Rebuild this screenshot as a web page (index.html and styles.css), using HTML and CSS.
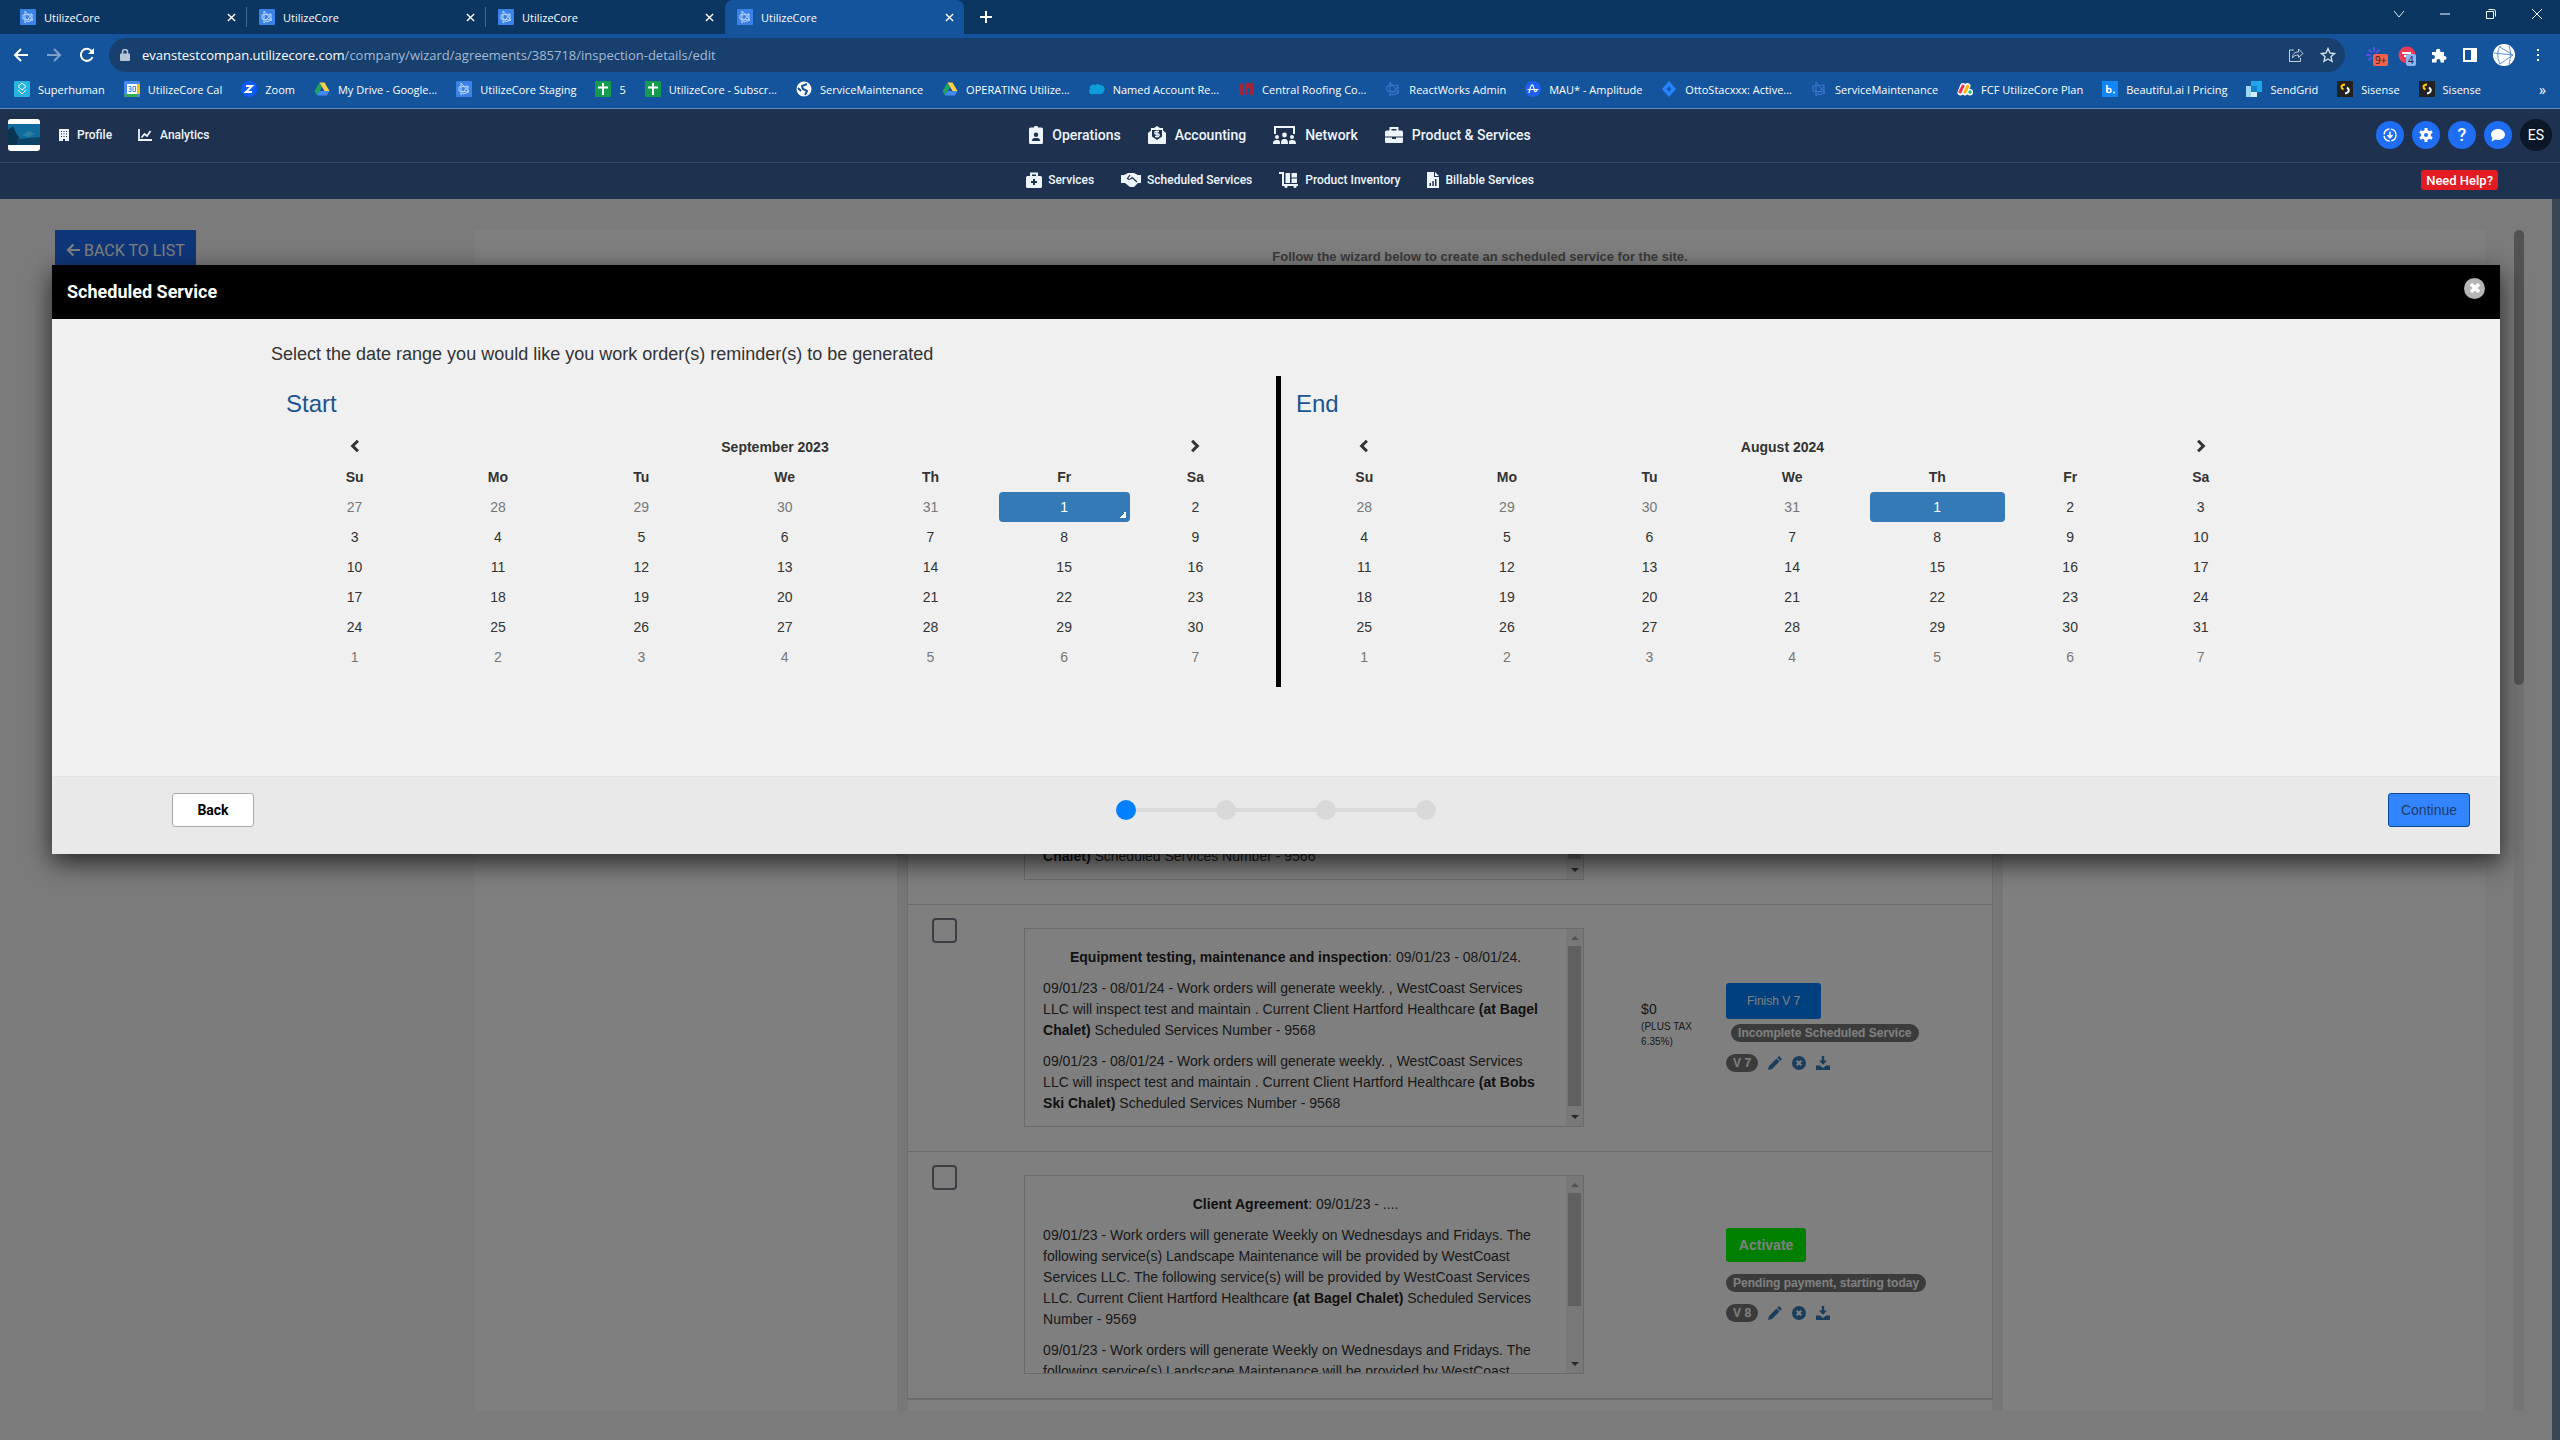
FILE: index.html
```html
<!DOCTYPE html>
<html lang="en">
<head>
  <meta charset="UTF-8">
  <meta name="viewport" content="width=device-width, initial-scale=1.0">
  <title>UtilizeCore</title>
  <link rel="stylesheet" href="styles.css">
</head>
<body>
  <!-- Shared icons -->
  <svg class="sprite" aria-hidden="true">
    <symbol id="i-core" viewBox="0 0 16 16"><rect width="16" height="16" rx="1" fill="#3a82e8"/><path d="M5 2v12l7-9M5 2l8 9-6 2M3 6l9-1v6l-9-1z" fill="none" stroke="#b9d6ff"/></symbol>
    <symbol id="i-core-dim" viewBox="0 0 16 16"><path d="M5 1v14l8-10M5 1l9 11-7 2M2 5l11-1v7L2 10z" fill="none" stroke="#3c78d0"/></symbol>
    <symbol id="i-close" viewBox="0 0 10 10"><path d="M1 1l8 8M9 1l-8 8" fill="none" stroke="currentColor" stroke-width="1.5"/></symbol>
    <symbol id="i-drive" viewBox="0 0 16 16"><path d="M5.500 1.500L8 6 3 14.500.500 10z" fill="#1ea362"/><path d="M5.500 1.500h5L15.500 10h-5z" fill="#ffcf48"/><path d="M5.500 10h10L13 14.500H3z" fill="#4688f4"/></symbol>
    <symbol id="i-sheet" viewBox="0 0 16 16"><rect width="16" height="16" rx="1" fill="#159b50"/><path d="M8 2v12M3 6.500h10" stroke="#fff" stroke-width="2"/></symbol>
    <symbol id="i-sisense" viewBox="0 0 16 16"><rect width="16" height="16" fill="#222"/><path d="M8 3.500C3 4 4 7 6.500 8.500" fill="none" stroke="#ffcb05" stroke-width="2"/><path d="M10 6.500c3 2 2 5.500-2 6" fill="none" stroke="#fff" stroke-width="2"/></symbol>
    <symbol id="i-left" viewBox="0 0 10 12"><path d="M7.500 1.500L3 6l4.500 4.500" fill="none" stroke="currentColor" stroke-width="2.600"/></symbol>
    <symbol id="i-right" viewBox="0 0 10 12"><path d="M2.500 1.500L7 6l-4.500 4.500" fill="none" stroke="currentColor" stroke-width="2.600"/></symbol>
    <symbol id="i-pencil" viewBox="0 0 14 14"><path d="M0 14l1-4 7.500-7.500 3 3L4 13zM9.300 1.700L11 0l3 3-1.700 1.700z" fill="currentColor"/></symbol>
    <symbol id="i-cancel" viewBox="0 0 14 14"><path fill-rule="evenodd" fill="currentColor" d="M7 0a7 7 0 1 0 0 14A7 7 0 0 0 7 0zM4 5.400L5.400 4 7 5.600 8.600 4 10 5.400 8.400 7 10 8.600 8.600 10 7 8.400 5.400 10 4 8.600 5.600 7z"/></symbol>
    <symbol id="i-download" viewBox="0 0 14 14"><path fill="currentColor" d="M5.800 0h2.400v4.500H11L7 8.800 3 4.500h2.800zM0 9.500h4L7 12l3-2.500h4V14H0z"/></symbol>
  </svg>

  <!-- Browser chrome -->
  <div class="tab-strip">
    <button class="tab"><svg class="icon16"><use href="#i-core"/></svg><span>UtilizeCore</span><svg class="tab-close"><use href="#i-close"/></svg></button>
    <button class="tab"><svg class="icon16"><use href="#i-core"/></svg><span>UtilizeCore</span><svg class="tab-close"><use href="#i-close"/></svg></button>
    <button class="tab"><svg class="icon16"><use href="#i-core"/></svg><span>UtilizeCore</span><svg class="tab-close"><use href="#i-close"/></svg></button>
    <button class="tab active"><svg class="icon16"><use href="#i-core"/></svg><span>UtilizeCore</span><svg class="tab-close"><use href="#i-close"/></svg></button>
    <button class="new-tab" aria-label="New tab"><svg width="12" height="12" viewBox="0 0 12 12"><path d="M6 0v12M0 6h12" stroke="#fff" stroke-width="2"/></svg></button>
    <div class="window-controls">
      <button aria-label="Search tabs"><svg width="12" height="12" viewBox="0 0 12 12"><path d="M1 3l5 6 5-6" fill="none" stroke="#dfe8f2"/></svg></button>
      <button aria-label="Minimize"><svg width="12" height="12" viewBox="0 0 12 12"><path d="M1 6h10" stroke="#fff"/></svg></button>
      <button aria-label="Restore"><svg width="12" height="12" viewBox="0 0 12 12"><path d="M1.500 3.500h7v7h-7zM3.500 1.500h5a2 2 0 0 1 2 2v5" fill="none" stroke="#fff"/></svg></button>
      <button aria-label="Close"><svg width="12" height="12" viewBox="0 0 12 12"><path d="M1 1l10 10M11 1L1 11" stroke="#fff"/></svg></button>
    </div>
  </div>

  <div class="toolbar">
    <div class="nav-buttons">
      <button aria-label="Back"><svg width="16" height="16" viewBox="0 0 16 16"><path d="M15 8H2M8 2L2 8l6 6" fill="none" stroke="#fff" stroke-width="2"/></svg></button>
      <button aria-label="Forward"><svg width="16" height="16" viewBox="0 0 16 16"><path d="M1 8h13M8 2l6 6-6 6" fill="none" stroke="#7d9fc9" stroke-width="2"/></svg></button>
      <button aria-label="Reload"><svg width="16" height="16" viewBox="0 0 16 16"><path d="M13.500 10a6 6 0 1 1-1-6" fill="none" stroke="#fff" stroke-width="2"/><path d="M15 1v6H9z" fill="#fff"/></svg></button>
    </div>
    <div class="address">
      <svg width="10" height="12" viewBox="0 0 10 12"><rect y="4.500" width="10" height="7.500" rx="1" fill="#b9c6d6"/><path d="M2.500 5V3a2.500 2.500 0 0 1 5 0v2" fill="none" stroke="#b9c6d6" stroke-width="1.500"/></svg>
      <span class="url"><b>evanstestcompan.utilizecore.com</b>/company/wizard/agreements/385718/inspection-details/edit</span>
      <svg class="share" width="16" height="16" viewBox="0 0 16 16"><path d="M6 3H1.500v11.500h11V11M4.500 11c0-4 2-6 6-6V2l4.500 4.500-4.500 4V8c-3 0-5 1-6 3z" fill="none" stroke="#c4d0df"/></svg>
      <svg width="16" height="16" viewBox="0 0 16 16"><path d="M8 1.500l2 4.500 4.500.500-3.500 3 1 4.800L8 12l-4 2.300 1-4.800-3.500-3L6 6z" fill="none" stroke="#d5deea" stroke-width="1.400"/></svg>
    </div>
    <div class="extensions">
      <span class="ext"><svg width="18" height="18" viewBox="0 0 18 18"><path d="M9 1v16M1 9h16M3.500 3.500l11 11M14.500 3.500l-11 11" stroke="#5a50e0" stroke-width="2"/><circle cx="9" cy="9" r="3" fill="#14549c"/></svg><i class="ext-count red">9+</i></span>
      <span class="ext"><svg width="18" height="18" viewBox="0 0 18 18"><circle cx="9" cy="9" r="8.500" fill="#ee3a56"/><path d="M4 7h9M6 10h8" stroke="#fff" stroke-width="2"/></svg><i class="ext-count blue">4</i></span>
      <svg width="16" height="16" viewBox="0 0 16 16"><path d="M1 5h4V4a2.200 2.200 0 0 1 4.400 0v1H13v4h.500a2 2 0 0 1 0 4H13v2.500H9.500V14a2 2 0 0 0-4 0v1.500H1V12h1a2 2 0 0 0 0-4H1z" fill="#fff"/></svg>
      <svg width="16" height="16" viewBox="0 0 16 16"><path fill-rule="evenodd" d="M1 1h14v14H1zM3 3v10h6V3z" fill="#fff"/></svg>
      <svg width="22" height="22" viewBox="0 0 22 22"><circle cx="11" cy="11" r="11" fill="#fff"/><path d="M7 2c-3 6-3 12 0 18M7 3l13 8-13 9M16 2c2 6 2 12 0 18M1 9l19 2" fill="none" stroke="#5d8fd6"/></svg>
      <svg width="16" height="16" viewBox="0 0 16 16"><path d="M7 2h2v2H7zM7 7h2v2H7zM7 12h2v2H7z" fill="#fff"/></svg>
    </div>
  </div>

  <nav class="bookmarks">
    <a href="#"><svg class="icon16" viewBox="0 0 16 16"><rect width="16" height="16" rx="1" fill="#27b5e0"/><path d="M8 2l4 3.500L8 9 4 5.500zM4 9l4 4 4-4" fill="none" stroke="#fff"/></svg>Superhuman</a>
    <a href="#"><svg class="icon16" viewBox="0 0 16 16"><rect width="16" height="16" rx="1" fill="#4688f4"/><path d="M13 3h3v10h-3z" fill="#fbbc04"/><path d="M0 13h13v3H1z" fill="#34a853"/><path d="M3 3h10v10H3z" fill="#fff"/><path d="M4.500 5.500H7v5H4.500M5 8h2M9 5.500h2.500v5H9z" fill="none" stroke="#4688f4"/></svg>UtilizeCore Cal</a>
    <a href="#"><svg class="icon16" viewBox="0 0 16 16"><circle cx="8" cy="8" r="8" fill="#0b5cff"/><path d="M5 5h6l-6 6h6" fill="none" stroke="#fff" stroke-width="2"/></svg>Zoom</a>
    <a href="#"><svg class="icon16"><use href="#i-drive"/></svg>My Drive - Google...</a>
    <a href="#"><svg class="icon16"><use href="#i-core"/></svg>UtilizeCore Staging</a>
    <a href="#"><svg class="icon16"><use href="#i-sheet"/></svg>5</a>
    <a href="#"><svg class="icon16"><use href="#i-sheet"/></svg>UtilizeCore - Subscr...</a>
    <a href="#"><svg class="icon16" viewBox="0 0 16 16"><circle cx="8" cy="8" r="7.500" fill="#fff"/><path d="M11 3L6 5l1 3 4 2-2 4M2 7l3 3" fill="none" stroke="#14549c" stroke-width="2"/></svg>ServiceMaintenance</a>
    <a href="#"><svg class="icon16"><use href="#i-drive"/></svg>OPERATING Utilize...</a>
    <a href="#"><svg class="icon16" viewBox="0 0 16 16"><path d="M4 13a3 3 0 0 1-3-5 3.500 3.500 0 0 1 5-4 4 4 0 0 1 5 0 4 4 0 0 1 4 6 4 4 0 0 1-5 3H4z" fill="#0d9dda"/></svg>Named Account Re...</a>
    <a href="#"><svg class="icon16" viewBox="0 0 16 16"><path d="M1 3l5-1v12H1zM7 2h8v12h-3V7H9v7H7z" fill="#a3243b"/></svg>Central Roofing Co...</a>
    <a href="#"><svg class="icon16"><use href="#i-core-dim"/></svg>ReactWorks Admin</a>
    <a href="#"><svg class="icon16" viewBox="0 0 16 16"><circle cx="8" cy="8" r="8" fill="#1e61f0"/><path d="M4 12C6 2 8 2 9 8c1 4 2 3 3 1M2.500 8.500h11" fill="none" stroke="#fff" stroke-width="1.200"/></svg>MAU* - Amplitude</a>
    <a href="#"><svg class="icon16" viewBox="0 0 16 16"><path d="M8 0l7 8-7 8-7-8z" fill="#2684ff"/><path d="M8 5l2.500 3L8 11 5.500 8z" fill="#1558bc"/></svg>OttoStacxxx: Active...</a>
    <a href="#"><svg class="icon16"><use href="#i-core-dim"/></svg>ServiceMaintenance</a>
    <a href="#"><svg class="icon16" viewBox="0 0 16 16"><path d="M3.500 11.500L6 5M8 11.500L10.500 5M13 11v.500" fill="none" stroke="#fff" stroke-width="6" stroke-linecap="round"/><path d="M3 11l3-6" stroke="#f62b54" stroke-width="3" stroke-linecap="round"/><path d="M8 11l3-6" stroke="#ffb900" stroke-width="3" stroke-linecap="round"/><circle cx="13" cy="11" r="1.700" fill="#00c875"/></svg>FCF UtilizeCore Plan</a>
    <a href="#"><svg class="icon16" viewBox="0 0 16 16"><rect width="16" height="16" fill="#1288f8"/><path d="M5 4v7.500" stroke="#fff" stroke-width="1.600"/><circle cx="7" cy="9.500" r="2" fill="none" stroke="#fff" stroke-width="1.500"/><circle cx="12" cy="11.500" r="1" fill="#fff"/></svg>Beautiful.ai I Pricing</a>
    <a href="#"><svg class="icon16" viewBox="0 0 16 16"><path d="M5 0h11v11h-5V5H5z" fill="#1fa6ea"/><path d="M0 5h5v11H0z" fill="#9dd6f5"/><path d="M5 5h6v6H5z" fill="#1382c8"/><path d="M5 11h6v5H5z" fill="#d8f0fc"/></svg>SendGrid</a>
    <a href="#"><svg class="icon16"><use href="#i-sisense"/></svg>Sisense</a>
    <a href="#"><svg class="icon16"><use href="#i-sisense"/></svg>Sisense</a>
    <a class="more" href="#">»</a>
  </nav>

  <!-- App header -->
  <header class="app-header">
    <div class="header-row">
      <div class="header-left">
        <svg class="company-logo" viewBox="0 0 32 32"><rect width="32" height="32" rx="3" fill="#fff"/><rect y="5" width="32" height="21" fill="#0f6c9c"/><path d="M0 11l5-4 3 7 3 4-2 8H0z" fill="#0a3550"/><path d="M9 20l23-2v8H9z" fill="#0b4468"/><path d="M14 16l7-4 6 3-6 3z" fill="#2c7fa0"/></svg>
        <a class="small-link" href="#"><svg width="10" height="12" viewBox="0 0 10 12"><path fill-rule="evenodd" fill="currentColor" d="M0 0h10v12H6v-2H4v2H0zM2 2v1h1V2zM4.500 2v1h1V2zM7 2v1h1V2zM2 4.500v1h1v-1zM4.500 4.500v1h1v-1zM7 4.500v1h1v-1zM2 7v1h1V7zM4.500 7v1h1V7zM7 7v1h1V7z"/></svg>Profile</a>
        <a class="small-link" href="#"><svg width="14" height="12" viewBox="0 0 14 12"><path d="M1 0v11h13M3.500 8.500L6.500 5 9 7l3.500-5" fill="none" stroke="currentColor" stroke-width="1.800"/></svg>Analytics</a>
      </div>
      <nav class="main-nav">
        <a href="#"><svg width="14" height="18" viewBox="0 0 14 18"><path fill-rule="evenodd" fill="currentColor" d="M5 1.500a2 2 0 0 1 4 0h3.500A1.500 1.500 0 0 1 14 3v13.500a1.500 1.500 0 0 1-1.500 1.500h-11A1.500 1.500 0 0 1 0 16.500V3a1.500 1.500 0 0 1 1.500-1.500zM7 6.500a2.200 2.200 0 1 0 0 4.400 2.200 2.200 0 0 0 0-4.400zM3 15h8c0-2-1-3-2.500-3h-3C4 12 3 13 3 15z"/></svg>Operations</a>
        <a href="#"><svg width="18" height="18" viewBox="0 0 18 18"><path fill-rule="evenodd" fill="currentColor" d="M9 0l3 2h3v2.500L18 7v10a1 1 0 0 1-1 1H1a1 1 0 0 1-1-1V7l3-2.500V2h3zM4 4v6.500l5 3.500 5-3.500V4z"/><path d="M11 5.500H8a1.200 1.200 0 0 0 0 2.500h2a1.200 1.200 0 0 1 0 2.500H7M9 4.500v7" fill="none" stroke="currentColor" stroke-width="1.300"/></svg>Accounting</a>
        <a href="#"><svg width="23" height="18" viewBox="0 0 23 18"><path d="M2 8V1h19v7" fill="none" stroke="currentColor" stroke-width="2"/><g fill="currentColor"><circle cx="4" cy="11" r="2"/><circle cx="11.500" cy="9" r="2.400"/><circle cx="19" cy="11" r="2"/><path d="M0 18c0-3 1-4 4-4s3 1 3 4zM8 18c0-4 1-5 3.500-5s3.500 1 3.500 5zM16 18c0-3 0-4 3-4s4 1 4 4z"/></g></svg>Network</a>
        <a href="#"><svg width="18" height="18" viewBox="0 0 18 18"><path d="M5.500 5V2h7v3" fill="none" stroke="currentColor" stroke-width="2"/><path fill="currentColor" d="M1.500 4.500h15A1.500 1.500 0 0 1 18 6v4.500H0V6a1.500 1.500 0 0 1 1.500-1.500zM0 11.500h7v1.500h4v-1.500h7v4a1.500 1.500 0 0 1-1.500 1.500h-15A1.500 1.500 0 0 1 0 15.500z"/></svg>Product &amp; Services</a>
      </nav>
      <div class="header-right">
        <button class="round" aria-label="Downloads"><svg width="16" height="16" viewBox="0 0 16 16"><circle cx="8" cy="8" r="6" fill="none" stroke="#fff" stroke-width="1.400" stroke-dasharray="8 1.500"/><path d="M8 4.500v6M5.500 8L8 10.800 10.500 8" fill="none" stroke="#fff" stroke-width="1.500"/></svg></button>
        <button class="round" aria-label="Settings"><svg width="16" height="16" viewBox="0 0 16 16"><circle cx="8" cy="8" r="3.500" fill="none" stroke="#fff" stroke-width="3"/><path d="M8 1v3M8 12v3M2 4.500l2.500 1.400M11.500 10.100L14 11.500M14 4.500l-2.500 1.400M4.500 10.100L2 11.500" stroke="#fff" stroke-width="3"/></svg></button>
        <button class="round help" aria-label="Help">?</button>
        <button class="round" aria-label="Chat"><svg width="16" height="16" viewBox="0 0 16 16"><path d="M8 2c4 0 7 2.500 7 5.500S12 13 8 13c-1 0-1.800-.200-2.600-.400L1.500 14.500l1-3.500C1.500 10 1 9 1 7.500 1 4.500 4 2 8 2z" fill="#fff"/></svg></button>
        <button class="avatar">ES</button>
      </div>
    </div>
    <div class="header-row sub">
      <nav class="sub-nav">
        <a href="#"><svg width="16" height="16" viewBox="0 0 16 16"><path d="M5 5V1.500h6V5" fill="none" stroke="currentColor" stroke-width="2"/><path fill-rule="evenodd" fill="currentColor" d="M1.500 4h13A1.500 1.500 0 0 1 16 5.500v9a1.500 1.500 0 0 1-1.500 1.500h-13A1.500 1.500 0 0 1 0 14.500v-9A1.500 1.500 0 0 1 1.500 4zM7 7v2H5v2h2v2h2v-2h2V9H9V7z"/></svg>Services</a>
        <a href="#"><svg width="20" height="14" viewBox="0 0 20 14"><path fill="currentColor" d="M0 2h3l4-2h3l3 0 4 2h3v8h-3l-4 4H9L4 10H0z"/><path d="M9 2L6.500 5.500C8 7 10 6 11 4.500l5 4.500" fill="none" stroke="#1e3250" stroke-width="1.200"/></svg>Scheduled Services</a>
        <a href="#"><svg width="20" height="16" viewBox="0 0 20 16"><path d="M0 1h4v12h15" fill="none" stroke="currentColor" stroke-width="2"/><path d="M6.500 1H11v10H6.500zM12.500 1H18v4.500h-5.500zM12.500 6.500H18V11h-5.500z" fill="currentColor"/><circle cx="7" cy="14.500" r="1.500" fill="currentColor"/><circle cx="16" cy="14.500" r="1.500" fill="currentColor"/></svg>Product Inventory</a>
        <a href="#"><svg width="12" height="16" viewBox="0 0 12 16"><path fill-rule="evenodd" fill="currentColor" d="M0 0h7v5h5v11H0zM2.500 11v3H4v-3zM5.300 9v5h1.500V9zM8 7v7h1.500V7z"/><path d="M8 0l4 4H8z" fill="currentColor"/></svg>Billable Services</a>
      </nav>
      <button class="need-help">Need Help?</button>
    </div>
  </header>

  <main class="page">
    <div class="page-side"><a class="back-link" href="#"><svg width="14" height="14" viewBox="0 0 14 14"><path d="M14 7H2M7.500 1.500L2 7l5.500 5.500" fill="none" stroke="currentColor" stroke-width="2.200"/></svg>BACK TO LIST</a></div>
    <section class="panel">
      <p class="panel-title">Follow the wizard below to create an scheduled service for the site.</p>
      <div class="agreements">
        <table>
          <colgroup><col class="c-check"><col class="c-text"><col class="c-price"><col></colgroup>
          <tbody>
            <tr>
              <td class="check"><input type="checkbox" aria-label="Select version 6"></td>
              <td>
                <div class="terms">
                  <div class="terms-text">
                    <h3><b>Equipment testing, maintenance and inspection</b>: 09/01/23 - 08/01/24.</h3>
                    <p>09/01/23 - 08/01/24 - Work orders will generate weekly. , WestCoast Services LLC will inspect test and maintain . Current Client Hartford Healthcare <b>(at Bobs Ski Chalet)</b> Scheduled Services Number - 9566</p>
                    <p>09/01/23 - 08/01/24 - Work orders will generate weekly. , WestCoast Services LLC will inspect test and maintain . Current Client Hartford Healthcare <b>(at Bagel Chalet)</b> Scheduled Services Number - 9566</p>
                  </div>
                  <div class="scroll"><i class="up"></i><i class="thumb"></i><i class="down"></i></div>
                </div>
              </td>
              <td></td>
              <td></td>
            </tr>
            <tr>
              <td class="check"><input type="checkbox" aria-label="Select version 7"></td>
              <td>
                <div class="terms">
                  <div class="terms-text">
                    <h3><b>Equipment testing, maintenance and inspection</b>: 09/01/23 - 08/01/24.</h3>
                    <p>09/01/23 - 08/01/24 - Work orders will generate weekly. , WestCoast Services LLC will inspect test and maintain . Current Client Hartford Healthcare <b>(at Bagel Chalet)</b> Scheduled Services Number - 9568</p>
                    <p>09/01/23 - 08/01/24 - Work orders will generate weekly. , WestCoast Services LLC will inspect test and maintain . Current Client Hartford Healthcare <b>(at Bobs Ski Chalet)</b> Scheduled Services Number - 9568</p>
                  </div>
                  <div class="scroll"><i class="up"></i><i class="thumb"></i><i class="down"></i></div>
                </div>
              </td>
              <td class="price">$0<small>(PLUS TAX 6.35%)</small></td>
              <td>
                <div class="actions">
                  <button class="btn finish">Finish V 7</button>
                  <span class="badge inset">Incomplete Scheduled Service</span>
                  <div class="version">
                    <span class="badge">V 7</span>
                    <a href="#" aria-label="Edit"><svg><use href="#i-pencil"/></svg></a>
                    <a href="#" aria-label="Cancel"><svg><use href="#i-cancel"/></svg></a>
                    <a href="#" aria-label="Download"><svg><use href="#i-download"/></svg></a>
                  </div>
                </div>
              </td>
            </tr>
            <tr>
              <td class="check"><input type="checkbox" aria-label="Select version 8"></td>
              <td>
                <div class="terms">
                  <div class="terms-text">
                    <h3><b>Client Agreement</b>: 09/01/23 - ....</h3>
                    <p>09/01/23 - Work orders will generate Weekly on Wednesdays and Fridays. The following service(s) Landscape Maintenance will be provided by WestCoast Services LLC. The following service(s) will be provided by WestCoast Services LLC. Current Client Hartford Healthcare <b>(at Bagel Chalet)</b> Scheduled Services Number - 9569</p>
                    <p>09/01/23 - Work orders will generate Weekly on Wednesdays and Fridays. The following service(s) Landscape Maintenance will be provided by WestCoast</p>
                  </div>
                  <div class="scroll"><i class="up"></i><i class="thumb short"></i><i class="down"></i></div>
                </div>
              </td>
              <td></td>
              <td>
                <div class="actions spaced">
                  <button class="btn activate">Activate</button>
                  <span class="badge">Pending payment, starting today</span>
                  <div class="version">
                    <span class="badge">V 8</span>
                    <a href="#" aria-label="Edit"><svg><use href="#i-pencil"/></svg></a>
                    <a href="#" aria-label="Cancel"><svg><use href="#i-cancel"/></svg></a>
                    <a href="#" aria-label="Download"><svg><use href="#i-download"/></svg></a>
                  </div>
                </div>
              </td>
            </tr>
          </tbody>
        </table>
      </div>
    </section>
    <div class="page-scroll"><i></i></div>

    <!-- Date range dialog -->
    <div class="overlay">
      <div class="modal" role="dialog" aria-labelledby="modal-title">
        <div class="modal-header">
          <h2 id="modal-title">Scheduled Service</h2>
          <button class="modal-close" aria-label="Close"><svg width="12" height="12" viewBox="0 0 12 12"><path d="M2 2l8 8M10 2l-8 8" stroke="#fff" stroke-width="3.500"/></svg></button>
        </div>
        <div class="modal-body">
          <p>Select the date range you would like you work order(s) reminder(s) to be generated</p>
          <div class="ranges">
            <div class="range">
              <h3>Start</h3>
              <table class="calendar">
                <colgroup><col class="w-su"><col class="w-mo"><col class="w-tu"><col class="w-we"><col class="w-th"><col class="w-fr"><col class="w-sa"></colgroup>
                <thead>
                  <tr><th><button aria-label="Previous month"><svg><use href="#i-left"/></svg></button></th><th colspan="5">September 2023</th><th><button aria-label="Next month"><svg><use href="#i-right"/></svg></button></th></tr>
                  <tr><th>Su</th><th>Mo</th><th>Tu</th><th>We</th><th>Th</th><th>Fr</th><th>Sa</th></tr>
                </thead>
                <tbody>
                  <tr><td class="off">27</td><td class="off">28</td><td class="off">29</td><td class="off">30</td><td class="off">31</td><td class="selected today">1</td><td>2</td></tr>
                  <tr><td>3</td><td>4</td><td>5</td><td>6</td><td>7</td><td>8</td><td>9</td></tr>
                  <tr><td>10</td><td>11</td><td>12</td><td>13</td><td>14</td><td>15</td><td>16</td></tr>
                  <tr><td>17</td><td>18</td><td>19</td><td>20</td><td>21</td><td>22</td><td>23</td></tr>
                  <tr><td>24</td><td>25</td><td>26</td><td>27</td><td>28</td><td>29</td><td>30</td></tr>
                  <tr class="off"><td>1</td><td>2</td><td>3</td><td>4</td><td>5</td><td>6</td><td>7</td></tr>
                </tbody>
              </table>
            </div>
            <div class="range end">
              <h3>End</h3>
              <table class="calendar">
                <colgroup><col class="w-su"><col class="w-mo"><col class="w-tu"><col class="w-we"><col class="w-th"><col class="w-fr"><col class="w-sa"></colgroup>
                <thead>
                  <tr><th><button aria-label="Previous month"><svg><use href="#i-left"/></svg></button></th><th colspan="5">August 2024</th><th><button aria-label="Next month"><svg><use href="#i-right"/></svg></button></th></tr>
                  <tr><th>Su</th><th>Mo</th><th>Tu</th><th>We</th><th>Th</th><th>Fr</th><th>Sa</th></tr>
                </thead>
                <tbody>
                  <tr><td class="off">28</td><td class="off">29</td><td class="off">30</td><td class="off">31</td><td class="selected">1</td><td>2</td><td>3</td></tr>
                  <tr><td>4</td><td>5</td><td>6</td><td>7</td><td>8</td><td>9</td><td>10</td></tr>
                  <tr><td>11</td><td>12</td><td>13</td><td>14</td><td>15</td><td>16</td><td>17</td></tr>
                  <tr><td>18</td><td>19</td><td>20</td><td>21</td><td>22</td><td>23</td><td>24</td></tr>
                  <tr><td>25</td><td>26</td><td>27</td><td>28</td><td>29</td><td>30</td><td>31</td></tr>
                  <tr class="off"><td>1</td><td>2</td><td>3</td><td>4</td><td>5</td><td>6</td><td>7</td></tr>
                </tbody>
              </table>
            </div>
          </div>
        </div>
        <div class="modal-footer">
          <button class="btn back">Back</button>
          <ol class="steps"><li class="current"></li><li></li><li></li><li></li></ol>
          <button class="btn continue">Continue</button>
        </div>
      </div>
    </div>
  </main>
</body>
</html>
```

FILE: styles.css
```css
* {
  margin: 0;
  padding: 0;
  box-sizing: border-box;
}

body {
  display: flex;
  flex-direction: column;
  min-height: 100vh;
  background: #3b4654;
  color: #333;
  font-family: "Liberation Sans", Arial, sans-serif;
  font-size: 14px;
}

button {
  border: none;
  background: none;
  color: inherit;
  font: inherit;
  cursor: pointer;
}

a {
  color: inherit;
  text-decoration: none;
}

svg {
  display: block;
  flex: none;
}

.sprite {
  display: none;
}

.icon16 {
  width: 16px;
  height: 16px;
}

/* Browser chrome */
.tab-strip,
.toolbar,
.bookmarks {
  display: flex;
  align-items: center;
  color: #fff;
  font-family: "Open Sans", "Noto Sans", sans-serif;
  font-size: 11px;
}

.tab-strip {
  height: 34px;
  padding-left: 8px;
  background: #0c3662;
}

.tab {
  display: flex;
  align-items: center;
  gap: 8px;
  width: 239px;
  height: 20px;
  padding: 0 10px 0 12px;
  border-right: 1px solid #46688d;
  text-align: left;
}

.tab:nth-child(3) {
  border-color: transparent;
}

.tab span {
  flex: 1;
}

.tab-close {
  width: 9px;
  height: 9px;
}

.tab.active {
  height: 34px;
  border: none;
  border-radius: 8px 8px 0 0;
  background: #14549c;
}

.new-tab {
  margin-left: 16px;
}

.window-controls {
  display: flex;
  align-self: flex-start;
  margin-left: auto;
}

.window-controls button {
  display: grid;
  place-items: center;
  width: 46px;
  height: 28px;
}

.toolbar {
  height: 38px;
  padding: 4px 14px 0 13px;
  background: #14549c;
}

.nav-buttons {
  display: flex;
  gap: 17px;
  width: 96px;
}

.address {
  display: flex;
  flex: 1;
  align-items: center;
  gap: 12px;
  height: 34px;
  padding: 0 9px 0 11px;
  border-radius: 17px;
  background: #17406f;
}

.url {
  flex: 1;
  color: #a5bad2;
  font-size: 13px;
}

.url b {
  color: #fff;
  font-weight: 400;
}

.share {
  margin-right: 4px;
}

.extensions {
  display: flex;
  align-items: center;
  gap: 15px;
  margin-left: 20px;
}

.ext {
  position: relative;
}

.ext-count {
  position: absolute;
  left: 8px;
  top: 8px;
  padding: 0 2px;
  border-radius: 2px;
  color: #222;
  font-size: 10px;
  font-style: normal;
  line-height: 12px;
}

.ext-count.red {
  background: #f4604c;
}

.ext-count.blue {
  background: #8fb4f0;
}

.bookmarks {
  gap: 19px;
  height: 37px;
  padding: 0 14px 2px;
  border-bottom: 1px solid #5b8bb8;
  background: #14549c;
  white-space: nowrap;
}

.bookmarks a {
  display: flex;
  align-items: center;
  gap: 8px;
}

.bookmarks .more {
  margin-left: auto;
  font-size: 14px;
}

/* App header */
.app-header {
  background: #1e3250;
  color: #eef4fb;
  font-family: Roboto, sans-serif;
  font-weight: 500;
}

.header-row {
  display: grid;
  grid-template-columns: 1fr auto 1fr;
  align-items: center;
  height: 53px;
  padding: 0 8px 2px;
}

.header-row.sub {
  height: 37px;
  border-top: 1px solid #34496a;
}

.header-left,
.header-right,
.small-link,
.main-nav,
.main-nav a,
.sub-nav,
.sub-nav a {
  display: flex;
  align-items: center;
}

.header-left {
  gap: 26px;
}

.company-logo {
  width: 32px;
  height: 32px;
  margin-right: -7px;
}

.small-link {
  gap: 8px;
  font-size: 12px;
}

.main-nav {
  gap: 27px;
}

.main-nav a {
  gap: 9px;
}

.sub-nav {
  grid-column: 2;
  gap: 27px;
  font-size: 12px;
}

.sub-nav a {
  gap: 6px;
}

.header-right {
  justify-content: flex-end;
  gap: 8px;
}

.round,
.avatar {
  display: grid;
  place-items: center;
  width: 28px;
  height: 28px;
  border-radius: 50%;
  background: #1f6df2;
  color: #fff;
}

.round.help {
  font-size: 18px;
}

.avatar {
  width: 32px;
  height: 32px;
  background: #0b1626;
  font-weight: 400;
}

.need-help {
  justify-self: end;
  height: 20px;
  margin-right: 54px;
  padding: 0 5px;
  border-radius: 3px;
  background: #e31b23;
  color: #fff;
  font-size: 13px;
}

/* Page behind the dialog */
.page {
  position: relative;
  display: grid;
  grid-template-columns: 420px 1fr 10px;
  flex: 1;
  margin-right: 8px;
  padding: 31px 28px 29px 55px;
  background: #f6f6f6;
}

.back-link {
  display: inline-flex;
  align-items: center;
  gap: 4px;
  height: 40px;
  padding: 0 11px;
  background: #1f6df2;
  color: #fff;
  font: 16px Roboto, sans-serif;
}

.panel {
  margin-right: 29px;
  background: #fff;
}

.panel-title {
  height: 427px;
  padding-top: 18px;
  color: #777;
  font-size: 13px;
  font-weight: 700;
  line-height: 18px;
  text-align: center;
}

.agreements {
  margin: 0 24% 0 21%;
  padding-bottom: 12px;
  border: solid #eee;
  border-width: 0 11px;
}

.agreements table {
  width: 100%;
  border-collapse: collapse;
  table-layout: fixed;
  outline: 1px solid #dcdcdc;
}

.c-check {
  width: 116px;
}

.c-text {
  width: 617px;
}

.c-price {
  width: 85px;
}

.agreements td {
  height: 247px;
  border-bottom: 1px solid #d5d5d5;
  vertical-align: middle;
}

.agreements .check {
  padding: 13px 24px;
  vertical-align: top;
}

.check input {
  display: block;
  width: 25px;
  height: 25px;
  border: 2px solid #777c86;
  border-radius: 4px;
  appearance: none;
}

.terms {
  display: flex;
  width: 560px;
  height: 199px;
  overflow: hidden;
  border: 1px solid #d5d5d5;
}

.terms-text {
  flex: 1;
  padding: 18px;
  line-height: 21px;
}

.terms-text h3 {
  font-size: 14px;
  font-weight: 400;
  text-align: center;
}

.terms-text h3,
.terms-text p {
  margin-bottom: 10px;
}

.terms b {
  color: #222;
}

.scroll {
  display: flex;
  flex-direction: column;
  align-items: center;
  width: 17px;
  padding: 7px 0;
  background: #f1f1f1;
}

.up,
.down {
  border: solid transparent;
  border-width: 0 4px;
}

.up {
  margin-bottom: 6px;
  border-bottom: 4px solid #a3a3a3;
}

.down {
  margin-top: auto;
  border-top: 4px solid #505050;
}

.thumb {
  width: 13px;
  height: 160px;
  background: #c1c1c1;
}

.thumb.short {
  height: 113px;
}

.agreements .price {
  padding: 0 20px 8px 0;
  line-height: 20px;
}

.price small {
  display: block;
  font-size: 10px;
  line-height: 15px;
}

.actions {
  display: flex;
  flex-direction: column;
  align-items: flex-start;
  gap: 5px;
}

.actions.spaced {
  gap: 12px;
}

.btn {
  height: 34px;
  border-radius: 3px;
}

.finish {
  width: 95px;
  height: 36px;
  background: #0080ff;
  color: #fff;
  font-size: 12px;
}

.activate {
  width: 80px;
  background: #00ff00;
  color: #fff;
  font-weight: 700;
}

.badge {
  height: 18px;
  padding: 0 7px;
  border-radius: 9px;
  background: #777;
  color: #fff;
  font-size: 12px;
  font-weight: 700;
  line-height: 18px;
}

.badge.inset {
  margin: 0 0 7px 5px;
}

.version {
  display: flex;
  align-items: center;
  gap: 10px;
  color: #337ab7;
}

.version svg {
  width: 14px;
  height: 14px;
}

.page-scroll {
  border-radius: 5px;
  background: #eaeaea;
}

.page-scroll i {
  display: block;
  height: 455px;
  border-radius: 5px;
  background: #a6a6a6;
}

/* Dialog */
.overlay {
  position: absolute;
  inset: 0;
  padding: 66px 52px 0;
  background: rgba(0, 0, 0, 0.5);
}

.modal {
  background: #f0f0f0;
  box-shadow: 0 8px 24px rgba(0, 0, 0, 0.7);
}

.modal-header {
  display: flex;
  align-items: center;
  justify-content: space-between;
  height: 54px;
  padding: 0 15px 2px;
  background: #000;
  color: #fff;
}

.modal-header h2 {
  font: 700 18px Roboto, sans-serif;
}

.modal-close {
  display: grid;
  place-items: center;
  width: 21px;
  height: 21px;
  margin-bottom: 6px;
  border-radius: 50%;
  background: #b5b5b5;
}

.modal-body {
  padding: 25px 219px 89px;
}

.modal-body p {
  margin-bottom: 12px;
  font-size: 18px;
  line-height: 20px;
}

.ranges {
  display: grid;
  grid-template-columns: 1fr 1fr;
}

.range {
  padding: 12px 15px 15px;
}

.range.end {
  border-left: 5px solid #000;
}

.range h3 {
  margin-bottom: 12px;
  color: #1a5490;
  font-size: 24px;
  font-weight: 400;
  line-height: 32px;
}

.calendar {
  width: 100%;
  padding-left: 3px;
  border-spacing: 0;
  table-layout: fixed;
  text-align: center;
}

.w-su { width: 13.5%; }
.w-mo { width: 16%; }
.w-tu { width: 13.5%; }
.w-we { width: 16%; }
.w-th { width: 14%; }
.w-fr { width: 13.5%; }
.w-sa { width: 13.5%; }

.calendar th,
.calendar td {
  height: 30px;
  border-radius: 4px;
}

.calendar button svg {
  width: 12px;
  height: 14px;
}

.calendar .off,
.calendar .off td {
  color: #777;
}

.calendar .selected {
  background: #337ab7;
  color: #fff;
}

.calendar .today {
  background: linear-gradient(135deg, transparent 50%, #fff 50%) right 4px bottom 4px / 7px 7px no-repeat #337ab7;
}

.modal-footer {
  display: grid;
  grid-template-columns: 1fr auto 1fr;
  align-items: center;
  height: 78px;
  padding-bottom: 12px;
  border-top: 1px solid #e3e3e3;
  background: #e9e9e9;
}

.back {
  width: 82px;
  margin-left: 120px;
  border: 1px solid #aaa;
  background: #fff;
  color: #000;
  font: 700 14px Roboto, sans-serif;
}

.continue {
  justify-self: end;
  width: 82px;
  margin-right: 30px;
  border: 1px solid #0a4a9c;
  background: #3385ff;
  color: #223c66;
}

.steps {
  display: flex;
  align-items: center;
  gap: 80px;
  background: linear-gradient(#d9d9d9, #d9d9d9) center / 100% 4px no-repeat;
  list-style: none;
}

.steps li {
  width: 20px;
  height: 20px;
  border-radius: 50%;
  background: #d9d9d9;
}

.steps .current {
  background: #0080ff;
}
```
